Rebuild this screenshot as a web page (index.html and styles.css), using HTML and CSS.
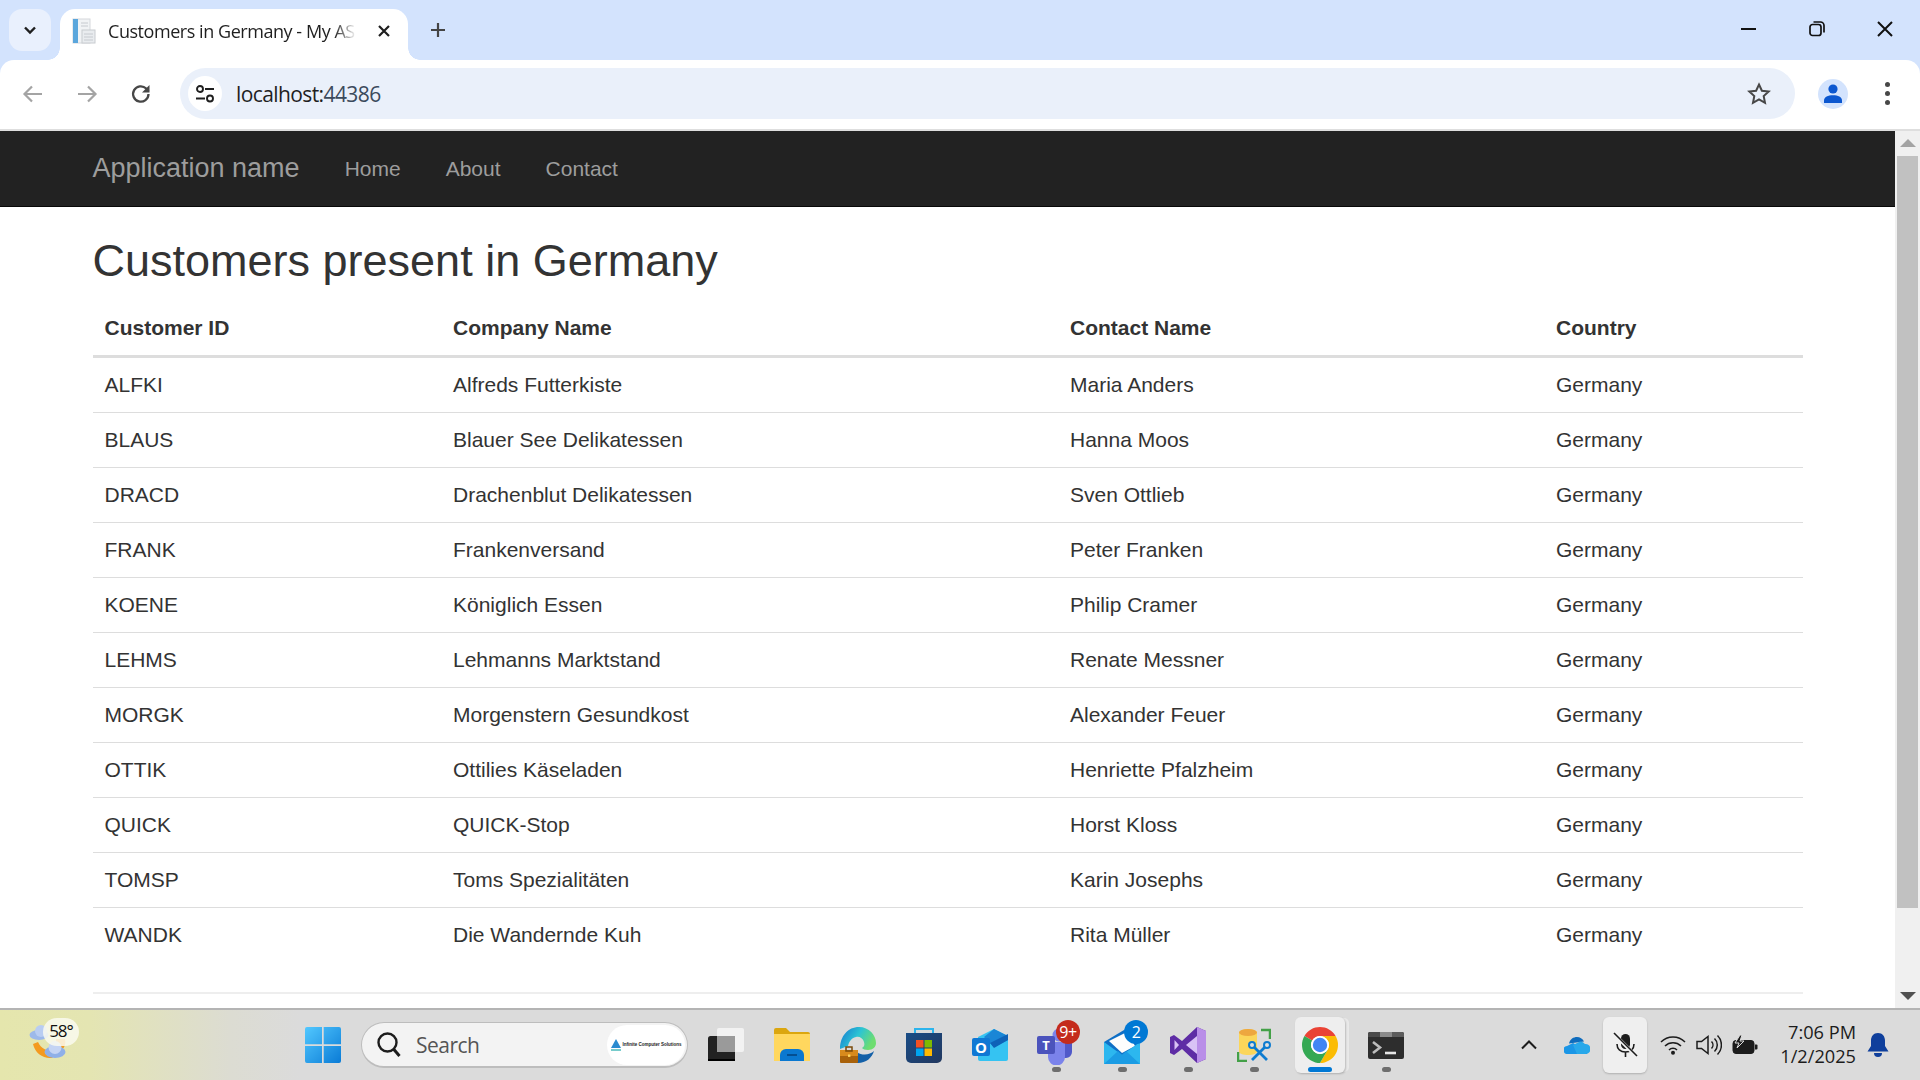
FILE: index.html
```html
<!DOCTYPE html>
<html lang="en">
<head>
<meta charset="utf-8">
<title>Customers in Germany - My ASP.NET Application</title>
<link rel="stylesheet" href="styles.css">
</head>
<body>
<header class="browser">
  <div class="tabstrip">
    <div class="tablist"><svg width="14" height="9" viewBox="0 0 14 9"><path d="M2 1.5l5 5 5-5" fill="none" stroke="#1f1f1f" stroke-width="2.4"/></svg></div>
    <div class="tab">
      <svg class="favicon" width="24" height="26" viewBox="0 0 24 26"><rect x="1" y="1" width="17" height="24" fill="#f1f3f5" stroke="#d5d8dc"/><rect x="1" y="1" width="5" height="24" fill="#5aa6dc"/><rect x="10" y="12" width="13" height="13" fill="#e9ecef" stroke="#c8ccd0"/><path d="M12 16h9M12 19h9M12 22h9M9 5h7M9 8h7" stroke="#c6cacf"/></svg>
      <span class="tabtitle">Customers in Germany - My ASP.NET Application</span>
      <svg class="tabclose" width="14" height="14" viewBox="0 0 14 14"><path d="M2 2l10 10M12 2L2 12" stroke="#1f1f1f" stroke-width="2.2"/></svg>
    </div>
    <svg class="newtab" width="18" height="18" viewBox="0 0 18 18"><path d="M9 2v14M2 9h14" stroke="#444" stroke-width="2.2"/></svg>
    <div class="winctl">
      <svg width="18" height="18" viewBox="0 0 18 18"><path d="M1 9h15" stroke="#111" stroke-width="2"/></svg>
      <svg width="18" height="18" viewBox="0 0 18 18"><rect x="2" y="4.5" width="11" height="11" rx="2.5" fill="none" stroke="#111" stroke-width="1.7"/><path d="M5.5 2h7a3.5 3.5 0 0 1 3.5 3.5v7" fill="none" stroke="#111" stroke-width="1.7"/></svg>
      <svg width="18" height="18" viewBox="0 0 18 18"><path d="M2 2l14 14M16 2L2 16" stroke="#111" stroke-width="2"/></svg>
    </div>
  </div>
  <div class="toolbar">
    <svg class="tool back" width="22" height="20" viewBox="0 0 22 20"><path d="M20 10H3M10 2.5L2.5 10l7.5 7.5" fill="none" stroke="#a4a4a4" stroke-width="2.2"/></svg>
    <svg class="tool forward" width="22" height="20" viewBox="0 0 22 20"><path d="M2 10h17M12 2.5l7.5 7.5-7.5 7.5" fill="none" stroke="#a4a4a4" stroke-width="2.2"/></svg>
    <svg class="tool reload" width="22" height="22" viewBox="0 0 22 22"><path d="M18.5 11a7.7 7.7 0 1 1-2.3-5.5L18.5 8" fill="none" stroke="#474747" stroke-width="2.3"/><path d="M19.5 2v7.5H12z" fill="#474747"/></svg>
    <div class="omnibox">
      <div class="siteicon"><svg width="20" height="20" viewBox="0 0 20 20"><circle cx="5" cy="5" r="3" fill="none" stroke="#1f1f1f" stroke-width="1.9"/><path d="M10 5h9M1 14.5h9" stroke="#1f1f1f" stroke-width="1.9"/><circle cx="15" cy="14.5" r="3" fill="none" stroke="#1f1f1f" stroke-width="1.9"/></svg></div>
      <span class="url">localhost:<span class="port">44386</span></span>
      <svg class="star" width="24" height="24" viewBox="0 0 24 24"><path d="M12 2.5l2.9 6.2 6.8.8-5 4.6 1.3 6.7-6-3.4-6 3.4 1.3-6.7-5-4.6 6.8-.8z" fill="none" stroke="#474747" stroke-width="2"/></svg>
    </div>
    <div class="profile"><svg width="20" height="20" viewBox="0 0 20 20"><circle cx="10" cy="5" r="4.6" fill="#0b57d0"/><path d="M1 19v-2.5C1 13 5 11.3 10 11.3s9 1.7 9 5.2V19z" fill="#0b57d0"/></svg></div>
    <div class="menu"><i></i><i></i><i></i></div>
  </div>
</header>

<div class="viewport">
  <main class="page">
    <nav class="navbar">
      <a class="brand">Application name</a>
      <a class="navlink">Home</a>
      <a class="navlink">About</a>
      <a class="navlink">Contact</a>
    </nav>
    <div class="container">
      <h2 class="title">Customers present in Germany</h2>
      <table class="grid">
        <colgroup><col class="c1"><col class="c2"><col class="c3"><col class="c4"></colgroup>
        <thead><tr><th>Customer ID</th><th>Company Name</th><th>Contact Name</th><th>Country</th></tr></thead>
        <tbody>
          <tr><td>ALFKI</td><td>Alfreds Futterkiste</td><td>Maria Anders</td><td>Germany</td></tr>
          <tr><td>BLAUS</td><td>Blauer See Delikatessen</td><td>Hanna Moos</td><td>Germany</td></tr>
          <tr><td>DRACD</td><td>Drachenblut Delikatessen</td><td>Sven Ottlieb</td><td>Germany</td></tr>
          <tr><td>FRANK</td><td>Frankenversand</td><td>Peter Franken</td><td>Germany</td></tr>
          <tr><td>KOENE</td><td>Königlich Essen</td><td>Philip Cramer</td><td>Germany</td></tr>
          <tr><td>LEHMS</td><td>Lehmanns Marktstand</td><td>Renate Messner</td><td>Germany</td></tr>
          <tr><td>MORGK</td><td>Morgenstern Gesundkost</td><td>Alexander Feuer</td><td>Germany</td></tr>
          <tr><td>OTTIK</td><td>Ottilies Käseladen</td><td>Henriette Pfalzheim</td><td>Germany</td></tr>
          <tr><td>QUICK</td><td>QUICK-Stop</td><td>Horst Kloss</td><td>Germany</td></tr>
          <tr><td>TOMSP</td><td>Toms Spezialitäten</td><td>Karin Josephs</td><td>Germany</td></tr>
          <tr><td>WANDK</td><td>Die Wandernde Kuh</td><td>Rita Müller</td><td>Germany</td></tr>
        </tbody>
      </table>
      <hr class="rule">
    </div>
  </main>
  <aside class="scrollbar">
    <svg class="arrow up" width="16" height="9" viewBox="0 0 16 9"><path d="M8 0l8 8H0z" fill="#a3a3a3"/></svg>
    <div class="thumb"></div>
    <svg class="arrow down" width="16" height="9" viewBox="0 0 16 9"><path d="M8 9L0 1h16z" fill="#505050"/></svg>
  </aside>
</div>

<footer class="taskbar">
  <div class="weather">
    <svg class="wicon" width="38" height="42" viewBox="0 0 38 42"><path d="M4 26c2 9 10 15 19 14l9-8c-9 3-19 1-23-8zM27 21h9c1 4 0 8-3 11l-6-3z" fill="#f49a1f"/><ellipse cx="10" cy="17" rx="9.500" ry="5" fill="#9db9ea"/><circle cx="12" cy="13" r="6" fill="#b9cdf2"/><ellipse cx="26" cy="34" rx="10.500" ry="6" fill="#8fb0e8"/><circle cx="26" cy="29.500" r="6.500" fill="#c4d4f4"/></svg>
    <span class="temp">58°</span>
  </div>
  <div class="slot">
    <svg width="36" height="36" viewBox="0 0 36 36"><defs><linearGradient id="w1" x1="0" y1="0" x2="1" y2="1"><stop offset="0" stop-color="#52c8ff"/><stop offset="1" stop-color="#0a7bd6"/></linearGradient></defs><path d="M2 0h15v17.300H0V2a2 2 0 0 1 2-2zM18.700 0H34a2 2 0 0 1 2 2v15.300H18.700zM0 19h17v17H2a2 2 0 0 1-2-2zM18.700 19H36v15a2 2 0 0 1-2 2H18.700z" fill="url(#w1)"/></svg>
  </div>
  <div class="search">
    <svg width="26" height="28" viewBox="0 0 26 28"><circle cx="11.500" cy="11.500" r="9" fill="none" stroke="#1c1c1c" stroke-width="2.400"/><path d="M17.500 18l6 7" stroke="#1c1c1c" stroke-width="3"/></svg>
    <span class="searchtext">Search</span>
    <div class="pill">
      <svg width="10" height="12" viewBox="0 0 10 12"><path d="M5 0l5 9H0z" fill="#2a8bd0"/><path d="M0 10h10v2H0z" fill="#7cc"/></svg>
      <span class="pilltext">Infinite Computer Solutions</span>
    </div>
  </div>
  <div class="apps">
    <div class="slot">
      <svg width="36" height="36" viewBox="0 0 36 36"><rect x="0" y="9" width="27" height="25" rx="2.500" fill="#222"/><rect x="0" y="32" width="27" height="2" fill="#000"/><rect x="9" y="1" width="27" height="24" rx="2" fill="#f2f2f2"/><rect x="9" y="9" width="18" height="16" fill="#9a9a9a"/></svg>
    </div>
    <div class="slot">
      <svg width="36" height="34" viewBox="0 0 36 34"><path d="M0 2a2 2 0 0 1 2-2h10l4 4h18a2 2 0 0 1 2 2v6H0z" fill="#dba60f"/><path d="M0 6h36v27H0z" fill="#ffd75e"/><path d="M6 33v-6a6 6 0 0 1 6-6h12a6 6 0 0 1 6 6v6z" fill="#0a78d0"/><path d="M13 27h10" stroke="#044f92" stroke-width="2"/></svg>
    </div>
    <div class="slot">
      <svg width="36" height="36" viewBox="0 0 36 36"><defs><linearGradient id="e1" x1="0" y1="0" x2="1" y2="0.400"><stop offset="0" stop-color="#1476cf"/><stop offset=".55" stop-color="#2cc4d4"/><stop offset="1" stop-color="#6edd70"/></linearGradient></defs><path d="M0 22C0 9 8 0 19 0c10 0 17 8 17 16 0 4-3 7-8 7-3 0-5-1-6-2 2-1 3-3 2-6-1-4-5-6-8-5-5 1-7 5-8 9z" fill="url(#e1)"/><path d="M17 25c5 4 13 3 17-1-2 7-8 12-16 12h-6V25z" fill="#1360a8"/><rect x="0" y="23" width="18" height="13" rx="1" fill="#a9620b"/><rect x="0" y="23" width="18" height="6" fill="#d88a1c"/><rect x="6" y="20" width="6" height="4" fill="none" stroke="#7a4a0a" stroke-width="1.500"/><rect x="8" y="27.500" width="2.400" height="2.400" fill="#ffd75e"/></svg>
    </div>
    <div class="slot">
      <svg width="36" height="36" viewBox="0 0 36 36"><defs><linearGradient id="s1" x1="0" y1="0" x2="1" y2="1"><stop offset="0" stop-color="#194c86"/><stop offset="1" stop-color="#22385f"/></linearGradient></defs><path d="M9 7V2h18v5" fill="none" stroke="#2cb4ec" stroke-width="2"/><path d="M0 6h36v25a5 5 0 0 1-5 5H5a5 5 0 0 1-5-5z" fill="url(#s1)"/><rect x="10" y="13" width="7.500" height="7.500" fill="#f25022"/><rect x="18.500" y="13" width="7.500" height="7.500" fill="#7fba00"/><rect x="10" y="21.500" width="7.500" height="7.500" fill="#00a4ef"/><rect x="18.500" y="21.500" width="7.500" height="7.500" fill="#ffb900"/></svg>
    </div>
    <div class="slot">
      <svg width="36" height="32" viewBox="0 0 36 32"><path d="M8 32a2 2 0 0 1-2-2V8l16-8 12 6a2 2 0 0 1 2 2v22a2 2 0 0 1-2 2z" fill="#35c3f2"/><path d="M12 8l10-8 14 7v4l-14 7z" fill="#1a86d6"/><path d="M18 14l18-9v6l-14 8z" fill="#0e62b8"/><rect x="0" y="9" width="18" height="18" rx="2" fill="#0f78d4"/><text class="otext" x="9" y="23.500">O</text></svg>
    </div>
    <div class="slot">
      <svg class="icon-lift" width="38" height="38" viewBox="0 0 38 38"><circle cx="22" cy="8" r="6.500" fill="#7b83eb"/><circle cx="32" cy="11" r="5" fill="#5059c9"/><path d="M12 15h23v10a6 6 0 0 1-6 6h-2v-16z" fill="#5059c9"/><path d="M11 15h17v15a8.500 8.500 0 0 1-17 0z" fill="#7b83eb"/><rect x="0" y="9" width="18" height="18" rx="2" fill="#4b53bc"/><text class="ttext" x="9" y="23">T</text></svg>
      <span class="badge red">9+</span>
    </div>
    <div class="slot">
      <svg class="icon-lift" width="36" height="36" viewBox="0 0 36 36"><path d="M0 14L20 2l16 12v22H0z" fill="#0f6fc6"/><path d="M5 13l18-9 8 14-13 7z" fill="#fdfdfd"/><path d="M0 14l18 13 18-13v22H0z" fill="#2cb7ef"/><path d="M0 36l14-13 4 4 4-4 14 13z" fill="#1b9ce4"/></svg>
      <span class="badge blue">2</span>
    </div>
    <div class="slot">
      <svg width="36" height="36" viewBox="0 0 36 36"><path d="M27 0l9 4v28l-9 4-15-14-8 6-4-2V10l4-2 8 6z" fill="#5e2ca5"/><path d="M27 0l9 4v28l-9 4z" fill="#b98ee8"/><path d="M27 9L16 18l11 9z" fill="#d9c2f5"/><path d="M4.500 13v10l4.500-5z" fill="#d9c2f5"/></svg>
    </div>
    <div class="slot">
      <svg width="34" height="34" viewBox="0 0 34 34"><path d="M2 4.500c0-2 5-3.500 9-3.500s9 1.500 9 3.500v19c0 2-4 3.500-9 3.500s-9-1.500-9-3.500z" fill="#fbd65a"/><ellipse cx="11" cy="4.500" rx="9" ry="3.500" fill="#eda73f"/><path d="M24 2h9v9M1 24v9h9" fill="none" stroke="#43a047" stroke-width="2.500"/><path d="M15 17l15 15M30 17L15 32" stroke="#0d7bd0" stroke-width="2.800"/><circle cx="15" cy="17" r="3" fill="#e0e0e0" stroke="#0d7bd0" stroke-width="2"/><circle cx="30" cy="17" r="3" fill="#e0e0e0" stroke="#0d7bd0" stroke-width="2"/></svg>
    </div>
    <div class="slot active">
      <svg width="36" height="36" viewBox="4 4 40 40"><path d="M6.680 14A20 20 0 0 1 41.320 14H24A10 10 0 0 0 15.340 19Z" fill="#ea4335"/><path d="M41.320 14A20 20 0 0 1 24 44L32.660 29A10 10 0 0 0 24 14Z" fill="#fbbc04"/><path d="M24 44A20 20 0 0 1 6.680 14L15.340 19A10 10 0 0 0 32.660 29Z" fill="#34a853"/><circle cx="24" cy="24" r="10" fill="#fff"/><circle cx="24" cy="24" r="8" fill="#4285f4"/></svg>
    </div>
    <div class="slot">
      <svg width="36" height="27" viewBox="0 0 36 27"><rect width="36" height="27" rx="2" fill="#2d2d2d"/><path d="M0 2a2 2 0 0 1 2-2h10v5H0z" fill="#4a4a4a"/><rect x="12" width="12" height="5" fill="#8a8a8a"/><path d="M24 0h10a2 2 0 0 1 2 2v3H24z" fill="#5c5c5c"/><path d="M5 10l7 5.500-7 5.500" fill="none" stroke="#bdbdbd" stroke-width="2.600"/><path d="M17 21h11" stroke="#e6e6e6" stroke-width="2.600"/></svg>
    </div>
    <i class="pip p1"></i><i class="pip p2"></i><i class="pip p3"></i><i class="pip p4"></i><i class="pip p5"></i>
    <i class="runbar"></i>
  </div>
  <div class="tray">
    <svg class="chev" width="18" height="10" viewBox="0 0 18 10"><path d="M2 8.500l7-7 7 7" fill="none" stroke="#1c1c1c" stroke-width="2"/></svg>
    <svg class="onedrive" width="26" height="17" viewBox="0 0 26 17"><path d="M5 6.500C6 2 9.500 0 13 0c3 0 5.500 1.500 7 4.500z" fill="#0f6cbd"/><path d="M4 17a4 4 0 0 1-1-8l6-3 6 3h8v8z" fill="#1b96e6"/><path d="M9 8l7-3.500a6 6 0 0 1 5 2.500 5 5 0 0 1 1 10H13z" fill="#28a8ea"/></svg>
    <div class="micbtn"><svg width="26" height="26" viewBox="0 0 26 26"><rect x="9" y="2" width="9" height="15" rx="4.500" fill="#1c1c1c"/><path d="M5 12c0 5 3.500 8 8.500 8s8.500-3 8.500-8M13.500 20v5" fill="none" stroke="#1c1c1c" stroke-width="1.600"/><path d="M2 2l22 22" stroke="#efefef" stroke-width="3.500"/><path d="M2 1l23 23" stroke="#1c1c1c" stroke-width="1.600"/></svg></div>
    <svg class="ticon wifi" width="26" height="20" viewBox="0 0 26 20"><path d="M1 7a17 17 0 0 1 24 0M5 11a11.500 11.500 0 0 1 16 0M9 15a5.500 5.500 0 0 1 8 0" fill="none" stroke="#1c1c1c" stroke-width="1.500"/><circle cx="13" cy="17.800" r="2" fill="#1c1c1c"/></svg>
    <svg class="ticon vol" width="26" height="22" viewBox="0 0 26 22"><path d="M1 7.500v7h4.500l6.500 5v-17l-6.500 5z" fill="none" stroke="#1c1c1c" stroke-width="1.500"/><path d="M15.500 7.500a5 5 0 0 1 0 7M18.500 4.500a9 9 0 0 1 0 13M21.500 1.500a13.500 13.500 0 0 1 0 19" fill="none" stroke="#1c1c1c" stroke-width="1.500"/></svg>
    <svg class="ticon batt" width="26" height="20" viewBox="0 0 26 20"><rect x="1" y="5.500" width="21" height="13" rx="3" fill="#1c1c1c" stroke="#1c1c1c"/><path d="M23 9.500h1.500a1 1 0 0 1 1 1v3a1 1 0 0 1-1 1H23z" fill="#1c1c1c"/><path d="M8 0L3 8h4l-2 5 7-7H8l2-6z" fill="#1c1c1c" stroke="#dcdcdc"/></svg>
    <div class="clock"><span>7:06 PM</span><span>1/2/2025</span></div>
    <svg class="bell" width="22" height="24" viewBox="0 0 22 24"><path d="M11 0c4.500 0 7 3.500 7 7.500V13l3.500 5.500H.5L4 13V7.500C4 3.500 6.500 0 11 0z" fill="#0f3f9c"/><path d="M7 20h8a4 4 0 0 1-8 0z" fill="#0f3f9c"/></svg>
  </div>
</footer>
</body>
</html>
```

FILE: styles.css
```css
* { box-sizing: border-box; }
html, body { margin: 0; padding: 0; height: 100%; overflow: hidden; }
body {
  display: flex;
  flex-direction: column;
  width: 1920px;
  height: 1080px;
  font-family: "Liberation Sans", Arial, sans-serif;
  background: #fff;
}

/* browser chrome */
.browser { flex: none; background: #d3e3fd; }
.tabstrip { height: 60px; display: flex; align-items: flex-start; padding: 9px 0 0 9px; }
.tablist {
  width: 42px; height: 42px; border-radius: 13px; background: #e9f0fd;
  display: flex; align-items: center; justify-content: center;
}
.tab {
  width: 348px; height: 51px; margin-left: 9px; background: #fff;
  border-radius: 15px 15px 0 0; display: flex; align-items: center;
  padding: 0 0 7px 12px; position: relative;
}
.tab::before, .tab::after {
  content: ""; position: absolute; bottom: 0; width: 12px; height: 12px;
  background: radial-gradient(circle at 0 0, #d3e3fd 11.5px, #fff 12px);
}
.tab::before { left: -12px; }
.tab::after { right: -12px; background: radial-gradient(circle at 100% 0, #d3e3fd 11.5px, #fff 12px); }
.favicon { flex: none; }
.tabtitle {
  margin-left: 12px; width: 251px; white-space: nowrap; overflow: hidden;
  font: 18px "Open Sans", "Noto Sans", sans-serif; color: #1f1f1f;
  letter-spacing: -0.45px;
  -webkit-mask-image: linear-gradient(90deg, #000 90%, transparent 99%);
  mask-image: linear-gradient(90deg, #000 90%, transparent 99%);
}
.tabclose { margin-left: 18px; flex: none; }
.newtab { margin: 12px 0 0 21px; }
.winctl { margin-left: auto; display: flex; align-items: center; gap: 50px; padding: 11px 26px 0 0; }

.toolbar {
  height: 71px; background: #fff; border-radius: 14px 14px 0 0;
  border-bottom: 2px solid #dedede; display: flex; align-items: center;
  padding: 0 0 2px 22px;
}
.tool { flex: none; }
.forward { margin-left: 32px; }
.reload { margin-left: 32px; }
.omnibox {
  margin-left: 28px; width: 1615px; height: 51px; border-radius: 26px; background: #eaf0fa;
  display: flex; align-items: center; padding: 0 24px 0 8px;
}
.siteicon {
  width: 34px; height: 35px; border-radius: 50%; background: #fff;
  display: flex; align-items: center; justify-content: center;
}
.url { margin-left: 14px; font: 21px "Open Sans", "Noto Sans", sans-serif; letter-spacing: -0.6px; color: #1f1f1f; }
.port { color: #3b4a5c; }
.star { margin-left: auto; }
.profile {
  margin-left: 23px; width: 30px; height: 30px; border-radius: 50%; background: #d3e3fd; flex: none;
  display: flex; align-items: flex-end; justify-content: center; padding-bottom: 5px;
}
.menu { margin-left: 37px; display: flex; flex-direction: column; gap: 4px; }
.menu i { width: 5px; height: 5px; border-radius: 50%; background: #474747; }

/* page */
.viewport { flex: 1; min-height: 0; display: flex; }
.page { flex: 1; min-width: 0; overflow: hidden; background: #fff; color: #333; }
.navbar {
  height: 76px; background: #222; border-bottom: 1px solid #080808;
  display: flex; align-items: center; padding-left: 92.5px;
  color: #9d9d9d; font-size: 21px;
}
.brand { font-size: 27px; margin-right: 22.5px; }
.navlink { padding: 0 22.5px; }
.container { width: 1755px; margin: 0 auto; padding: 0 22.5px; }
.title { margin: 29px 0 15px; font-size: 45px; line-height: 49.5px; font-weight: 400; color: #333; }
.grid { width: 1710px; border-collapse: collapse; table-layout: fixed; font-size: 21px; line-height: 30px; }
.c1 { width: 348.5px; }
.c2 { width: 617px; }
.c3 { width: 486px; }
.c4 { width: 258.5px; }
.grid th { text-align: left; padding: 12px; height: 56px; font-weight: 700; border-bottom: 3px solid #ddd; }
.grid td { padding: 12px; height: 55px; border-top: 1px solid #ddd; }
.grid tbody tr:first-child td { border-top: 0; }
.rule { margin: 29px 0 0; border: 0; border-top: 2px solid #eee; }

.scrollbar { flex: none; width: 25px; background: #f0f0f0; display: flex; flex-direction: column; align-items: center; }
.arrow { flex: none; }
.up { margin-top: 8px; }
.thumb { width: 21px; height: 752px; margin-top: 8px; background: #c1c1c1; }
.down { margin-top: 83px; }

/* taskbar */
.taskbar {
  flex: none; height: 72px; border-top: 2px solid #b4b4b4;
  background: linear-gradient(90deg, #e5e6ad 0, #e4e5b2 90px, #dcdcd2 230px, #dbdbdb 300px, #dbdbdb 100%);
  display: flex; align-items: center; position: relative;
}
.weather { width: 289.5px; height: 100%; position: relative; flex: none; }
.wicon { position: absolute; left: 29px; top: 8px; }
.temp {
  position: absolute; left: 43px; top: 8px; width: 36px; height: 28px; border-radius: 14px;
  background: rgba(250,250,240,.85); text-align: center;
  font: 17px/26px "Open Sans", "Noto Sans", sans-serif; letter-spacing: -1px; color: #111;
}
.slot { width: 66px; height: 56px; display: flex; align-items: center; justify-content: center; flex: none; position: relative; }
.search {
  width: 327px; height: 46px; margin-left: 5.5px; border-radius: 23px; background: #f3f3f3;
  border: 2px solid #bdbdbd; border-width: 1px 1px 2px; display: flex; align-items: center;
  padding: 0 2px 0 14px; flex: none;
}
.searchtext { margin-left: 14px; font: 21px "Open Sans", "Noto Sans", sans-serif; letter-spacing: -0.5px; color: #555; }
.pill {
  margin-left: auto; width: 78px; height: 40px; border-radius: 20px; background: #fff;
  display: flex; align-items: center; justify-content: center; gap: 2px;
}
.pilltext { font-size: 4.5px; font-weight: 700; color: #222; white-space: nowrap; }
.apps { display: flex; margin-left: 5px; position: relative; height: 56px; flex: none; }
.active { width: 50px; margin: 0 8px; background: #eee; border-radius: 6px; box-shadow: 1px 1px 2px rgba(0,0,0,.2), 5px 0 0 -1px #e9e9e9; }
.otext { font: 700 15px "Open Sans", sans-serif; fill: #fff; text-anchor: middle; }
.ttext { font: 700 13px "Open Sans", sans-serif; fill: #fff; text-anchor: middle; }
.icon-lift { margin-top: 1px; }
.badge {
  position: absolute; width: 24px; height: 24px; border-radius: 50%; top: 3px; color: #fff;
  font: 16px/24px "Open Sans", sans-serif; text-align: center; letter-spacing: -.5px;
}
.red { background: #c42b1c; right: 9px; }
.blue { background: #0078d4; right: 7px; }
.pip { position: absolute; top: 50px; width: 9px; height: 5px; border-radius: 3px; background: #6e6e6e; }
.p1 { left: 359px; }
.p2 { left: 425px; }
.p3 { left: 491px; }
.p4 { left: 557px; }
.p5 { left: 689px; }
.runbar { position: absolute; top: 50px; left: 615px; width: 24px; height: 5px; border-radius: 3px; background: #0078d4; }
.tray { flex: 1; display: flex; align-items: center; height: 56px; color: #1c1c1c; }
.chev { margin-left: 101px; }
.onedrive { margin-left: 26px; }
.micbtn {
  margin-left: 13px; width: 44px; height: 56px; border-radius: 6px; background: #efefef;
  box-shadow: 0 1px 2px rgba(0,0,0,.2); display: flex; align-items: center; justify-content: center;
}
.wifi { margin-left: 13px; }
.vol { margin-left: 10px; }
.batt { margin-left: 10px; }
.clock {
  margin-left: 8px; width: 90px; flex: none; display: flex; flex-direction: column; align-items: flex-end;
  margin-top: -3px;
  font: 18.2px/24px "Open Sans", "Noto Sans", sans-serif; color: #1c1c1c;
}
.bell { margin-left: 11px; }
```
